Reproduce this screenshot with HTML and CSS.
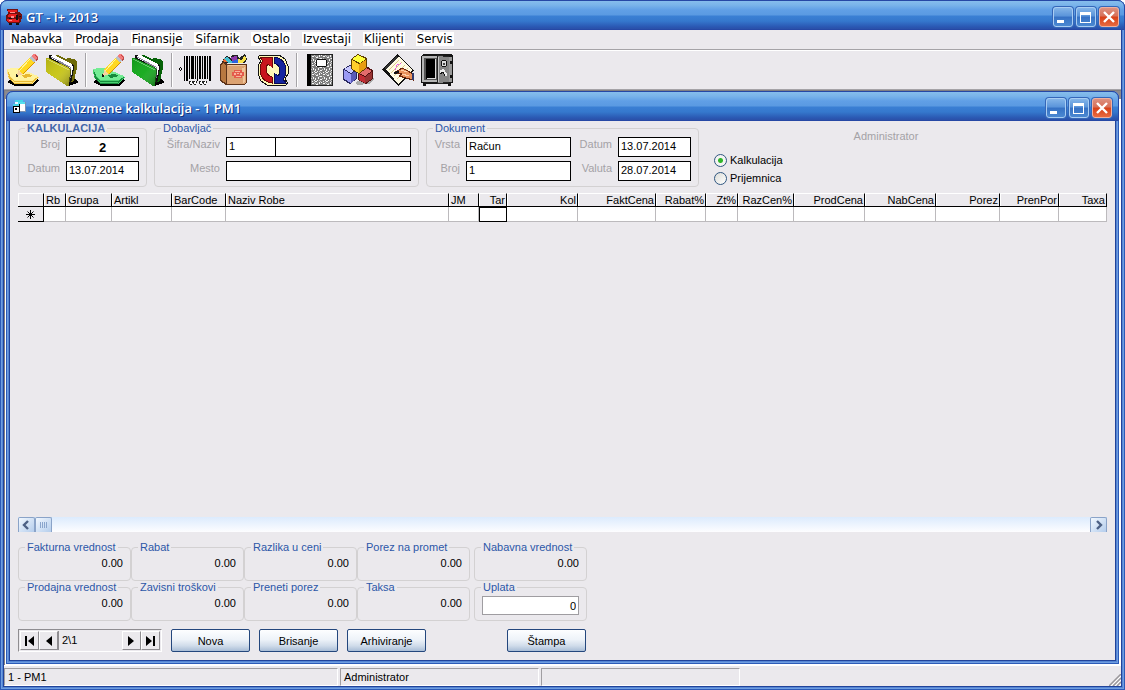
FILE: index.html
```html
<!DOCTYPE html>
<html lang="sr-Latn">
<head>
<meta charset="utf-8">
<title>GT - I+ 2013</title>
<link rel="stylesheet" href="styles.css">
</head>
<body>
<svg class="defs" aria-hidden="true">
  <symbol id="pad" viewBox="0 0 32 32">
    <path d="M3 25H29L32 26L27 32H8L0 28Z" fill="#000"/>
    <path d="M0 16L1 24L7 30H26L32 23L27 21L12 14Z" class="paper-edge"/>
    <path d="M0 15L5 14H13L28 21L32 22L26 26H7L2 20Z" class="paper-top"/>
    <path d="M1 22L7 27H26L31 23M2 24L7 29H25L29 25M1 18L3 23" fill="none" class="paper-line"/>
    <path d="M14 21L22 20L26 22L18 24Z" class="paper-mid"/>
    <path d="M10 22L11 16L22 4L28 8L16 20Z" fill="#d89000"/>
    <path d="M11 16L22 4L27 8L15 20Z" fill="#ffd820"/>
    <path d="M12 17L23 5" stroke="#fff49a"/>
    <path d="M22 4L24 2L29 6L27 9Z" fill="#b9bfc8"/>
    <path d="M24 2L26 0H28L31 3V5L29 7Z" fill="#f47b7b"/>
    <path d="M28 1L31 4L29 7" fill="none" stroke="#b84848"/>
    <path d="M10 22L11 16L16 20Z" fill="#f8d2a0"/>
    <path d="M9 23V20L12 22Z" fill="#111"/>
  </symbol>
  <symbol id="folder" viewBox="0 0 32 32">
    <path d="M24 25L29 25L32 27V29L28 30L23 32Z" fill="#000"/>
    <path d="M8 2L12 1L20 5L22 4L28 5L31 8V14L28 27L25 28L23 12Z" class="folder-back"/>
    <path d="M3 4V1H8L28 11V15L25 29H22V15Z" fill="#111"/>
    <path d="M4 3L6 1H8L26 10L27 13L25 24H24V15L22 13L5 4Z" fill="#fff"/>
    <path d="M5 3L24 13L25 24" fill="none" stroke="#8b899c"/>
    <path d="M0 4H3L22 13L25 16L23 32H21L0 18Z" class="folder-front"/>
    <path d="M0 4H3L22 13L25 16L23 32H21L0 18Z" fill="url(#shade)"/>
    <path d="M1 5L23 16" fill="none" stroke="#fff" stroke-opacity=".35"/>
    <path d="M3 4L22 13L25 16L23 31" fill="none" stroke="#000" stroke-opacity=".5"/>
  </symbol>
  <symbol id="arrow" viewBox="0 0 32 32">
    <path d="M15 29Q3 27 3 15Q3 10 6 7L3 3H15V14L11 10Q9 12 9 15Q9 21 15 23Z"/>
  </symbol>
  <linearGradient id="shade" x1="0" y1="0" x2="1" y2="1">
    <stop offset="0" stop-color="#000" stop-opacity=".12"/>
    <stop offset=".5" stop-color="#fff" stop-opacity=".05"/>
    <stop offset="1" stop-color="#000" stop-opacity=".4"/>
  </linearGradient>
  <pattern id="marble" width="11" height="9" patternUnits="userSpaceOnUse">
    <rect width="11" height="9" fill="#7c7c7c"/>
    <path d="M0 0H2V1H0ZM4 1H5V3H4ZM1 3H3V4H1ZM5 4H7V5H5ZM3 5H4V7H3ZM6 1H7V2H6ZM0 6H1V8H0ZM8 2H10V3H8ZM9 5H10V7H9ZM5 7H7V8H5ZM8 0H9V1H8ZM2 8H3V9H2ZM10 8H11V9H10Z" fill="#f6f6f6"/>
    <path d="M2 2H3V3H2ZM5 0H6V1H5ZM4 4H5V5H4ZM0 2H1V3H0ZM7 6H8V7H7ZM8 4H9V5H8ZM10 1H11V2H10ZM4 8H5V9H4Z" fill="#c4c4c4"/>
  </pattern>
  <symbol id="minimize" viewBox="0 0 20 20"><path d="M4 13H11V16H4Z" fill="#fff"/></symbol>
  <symbol id="maximize" viewBox="0 0 20 20"><path d="M4 5H15V16H4ZM5 8V15H14V8Z" fill="#fff" fill-rule="evenodd"/></symbol>
  <symbol id="close" viewBox="0 0 20 20"><path d="M5 5L15 15M15 5L5 15" stroke="#fff" stroke-width="2.4"/></symbol>
</svg>

<div class="window">
  <header class="titlebar">
    <svg class="title-icon" viewBox="0 0 16 16" shape-rendering="crispEdges">
      <path d="M1 0H12V3H13L16 5V9L14 14H2L0 11V6L2 5V2H1Z" fill="#701010"/>
      <path d="M2 1H11V3H2ZM3 5H11L12 8H2ZM1 10H13V13H2Z" fill="#e81c1c"/>
      <path d="M4 3H9V4H4ZM5 7H8V9H5ZM3 11H6V12H3Z" fill="#ff8a8a"/>
      <path d="M10 6H12V11H10ZM3 9H6V10H3ZM3 14H6V16H3ZM10 14H13V16H10ZM13 7H15V8H13Z" fill="#111"/>
    </svg>
    <h1 class="caption">GT - I+ 2013</h1>
    <div class="window-buttons">
      <button class="wb" aria-label="Minimize"><svg><use href="#minimize"/></svg></button>
      <button class="wb" aria-label="Maximize"><svg><use href="#maximize"/></svg></button>
      <button class="wb wb-close" aria-label="Close"><svg><use href="#close"/></svg></button>
    </div>
  </header>

  <div class="frame">
    <nav class="menu">
      <a href="#">Nabavka</a><a href="#">Prodaja</a><a href="#">Finansije</a><a href="#">Sifarnik</a><a href="#">Ostalo</a><a href="#">Izvestaji</a><a href="#">Klijenti</a><a href="#">Servis</a>
    </nav>

    <div class="toolbar" role="toolbar">
      <button class="tool yellow" aria-label="Nova nabavka"><svg shape-rendering="crispEdges"><use href="#pad"/></svg></button>
      <button class="tool yellow" aria-label="Pregled nabavki"><svg shape-rendering="crispEdges"><use href="#folder"/></svg></button>
      <span class="sep"></span>
      <button class="tool green" aria-label="Nova prodaja"><svg shape-rendering="crispEdges"><use href="#pad"/></svg></button>
      <button class="tool green" aria-label="Pregled prodaje"><svg shape-rendering="crispEdges"><use href="#folder"/></svg></button>
      <span class="sep"></span>
      <button class="tool" aria-label="Bar kod">
        <svg viewBox="0 0 32 32" shape-rendering="crispEdges">
          <path d="M5 2H6V27H5ZM7 2H9V27H7ZM10 2H11V25H10ZM12 2H15V25H12ZM16 2H17V25H16ZM18 2H19V27H18ZM20 2H22V25H20ZM23 2H24V25H23ZM25 2H27V25H25ZM28 2H29V25H28ZM30 2H32V27H30Z" fill="#000"/>
          <path d="M0 14H1V13H2V14H3V16H2V17H1V16H0ZM1 14V16H2V14Z" fill="#000" fill-rule="evenodd"/>
          <path d="M10 27H13V30H10ZM14 27H17V30H14ZM20 27H23V30H20ZM24 27H27V30H24Z" fill="#fff" stroke="#222" stroke-dasharray="2 1"/>
        </svg>
      </button>
      <button class="tool" aria-label="Artikli">
        <svg viewBox="0 0 32 32" shape-rendering="crispEdges">
          <path d="M4 9L5 5L9 2L13 4L14 1H20L21 4L27 0L29 5L27 9Z" fill="#222"/>
          <path d="M5 6L8 3L13 8H6Z" fill="#ed6a2c"/><path d="M6 4L10 3L15 9H10Z" fill="#48bfd0"/>
          <path d="M13 3L19 2L20 7L15 9Z" fill="#8c38a8"/><path d="M14 7L20 5L21 9H14Z" fill="#2b62dc"/>
          <path d="M20 5L24 6L27 1L28 5L25 9H20Z" fill="#f8e34a"/>
          <path d="M2 10L5 7L10 10H29V28L26 31H8L2 27Z" fill="#5d3218"/>
          <path d="M3 11L5 9L8 12V29L3 26Z" fill="#b87840"/>
          <path d="M9 11H28V28L26 30H9Z" fill="#dba271"/>
          <path d="M10 11H27V12H10ZM24 14L27 13V28L25 29Z" fill="#efc59a"/>
          <path d="M14 18H16V16H24V18H26V22H24V24H16V22H14Z" fill="#e45b4c"/>
          <path d="M17 17H22V18H17ZM16 19H18V21H16ZM19 19H21V20H19ZM22 19H24V21H22ZM18 22H23V23H18Z" fill="#f7b49c"/>
        </svg>
      </button>
      <button class="tool" aria-label="Osveži">
        <svg viewBox="0 0 32 32" shape-rendering="crispEdges">
          <path d="M1 3L3 1H22L28 5L31 12V20L28 25L31 29L29 31H10L4 27L1 20V12L4 7Z" fill="#fff8b4" stroke="#111"/>
          <use href="#arrow" fill="#c9151d" stroke="#6b0909"/>
          <use href="#arrow" fill="#15259f" stroke="#090b50" transform="rotate(180 16 16)"/>
          <path d="M11 12H14L21 20H18Z" fill="#fff8c6"/>
        </svg>
      </button>
      <span class="sep"></span>
      <button class="tool" aria-label="Dnevnik">
        <svg viewBox="0 0 32 32" shape-rendering="crispEdges">
          <path d="M3 0H28L29 1V31L28 32H3Z" fill="#222"/>
          <path d="M7 1H28V31H7Z" fill="url(#marble)"/>
          <path d="M3 0H7V32H3Z" fill="#000"/>
          <path d="M13 5H22V6H23V12H22V13H13V12H12V6H13Z" fill="#111"/><path d="M13 6H22V12H13Z" fill="#fff"/>
        </svg>
      </button>
      <button class="tool" aria-label="Magacin">
        <svg viewBox="0 0 32 32" shape-rendering="crispEdges">
          <path d="M13 28L28 22L32 25L26 30L14 31Z" fill="#aaa"/>
          <path d="M0 15L7 11L14 15V25L7 30L0 26Z" fill="#26265f"/>
          <path d="M1 15L7 12L13 16L8 19Z" fill="#c6c6ff"/><path d="M1 16L8 20V29L1 25Z" fill="#9a9af4"/><path d="M8 20L13 17V25L8 29Z" fill="#5a5ab8"/>
          <path d="M15 18L23 12L30 16V25L23 30L15 26Z" fill="#541010"/>
          <path d="M16 19L23 14L29 17L22 22Z" fill="#e36c6c"/><path d="M16 20L22 23V29L16 26Z" fill="#c22c34"/><path d="M22 23L29 18V25L22 29Z" fill="#933"/>
          <path d="M8 5L15 0L24 4V14L16 20L8 15Z" fill="#604000"/>
          <path d="M9 5L15 1L23 5L17 9Z" fill="#ffff3c"/><path d="M9 6L16 10V19L9 15Z" fill="#ffce2b"/><path d="M16 10L23 6V14L16 19Z" fill="#e89d12"/>
        </svg>
      </button>
      <button class="tool" aria-label="Beleške">
        <svg viewBox="0 0 32 32" shape-rendering="crispEdges">
          <path d="M0 15L15 0L32 16L16 32Z" fill="#111"/>
          <path d="M4 15L17 2L30 16L16 30Z" fill="#fffbe4"/>
          <path d="M3 14L14 2L16 3L4 16Z" fill="#333"/>
          <path d="M7 16L17 6M9 19L20 8M12 22L23 11M15 25L26 14" stroke="#dcc987"/>
          <path d="M13 16L15 11L19 9" fill="none" stroke="#e65be2" stroke-dasharray="2 1"/>
          <path d="M12 19L20 14L24 16L31 20V26L24 24L17 22L20 20Z" fill="#e9925c" stroke="#6d250a"/>
          <path d="M19 16L25 18M20 20L27 22" stroke="#ffd0a8"/>
          <path d="M12 19L17 18" stroke="#111" stroke-width="2"/>
          <path d="M30 19H32V26H30Z" fill="#333c70"/>
        </svg>
      </button>
      <button class="tool" aria-label="Trezor">
        <svg viewBox="0 0 32 32" shape-rendering="crispEdges">
          <path d="M0 2L2 0H30L32 2V29H30V32H27V30H5V32H2V29H0Z" fill="#151515"/>
          <path d="M1 2H17V28H1Z" fill="#b5b5b5"/><path d="M3 4H16V26H3Z" fill="#555"/><path d="M5 5H14V25H5Z" fill="#000"/>
          <path d="M14 5H15V25H6V24H14Z" fill="#ddd"/>
          <path d="M16 1L28 3V28L16 30Z" fill="#858585" stroke="#222"/>
          <path d="M17 3H18V28H17Z" fill="#c7c7c7"/><path d="M28 3H31V28H28Z" fill="#999"/>
          <path d="M21 6H25V7H26V12H25V13H21V12H20V7H21Z" fill="#111"/><path d="M21 7H25V12H21Z" fill="#ddd"/><path d="M22 9H24V11H22Z" fill="#444"/>
          <path d="M19 18L22 16L25 20V22" fill="none" stroke="#eee" stroke-width="2"/><path d="M19 20L22 18L24 22" fill="none" stroke="#111"/>
          <path d="M29 7H31V10H29ZM29 21H31V24H29Z" fill="#111"/>
        </svg>
      </button>
    </div>

    <main class="mdi">
      <section class="child">
        <header class="titlebar titlebar-child">
          <svg class="title-icon" viewBox="0 0 16 16" shape-rendering="crispEdges">
            <path d="M3 0H11V9H3Z" fill="#eaf4ff"/><path d="M3 0H11V2H3Z" fill="#42d6e8"/>
            <path d="M6 2H13V11H6Z" fill="#fff" stroke="#7a8fb0"/><path d="M6 2H13V4H6Z" fill="#55e0ef"/>
            <path d="M1 4H7V12H1Z" fill="#fff" stroke="#000"/><path d="M1 4H7V6H1Z" fill="#48d4e4"/><path d="M1 6H7V7H1ZM3 8H5V10H3Z" fill="#000"/>
          </svg>
          <h2 class="caption">Izrada\Izmene kalkulacija - 1 PM1</h2>
          <div class="window-buttons">
            <button class="wb" aria-label="Minimize"><svg><use href="#minimize"/></svg></button>
            <button class="wb" aria-label="Maximize"><svg><use href="#maximize"/></svg></button>
            <button class="wb wb-close" aria-label="Close"><svg><use href="#close"/></svg></button>
          </div>
        </header>

        <form class="body">
          <div class="head">
            <fieldset class="group">
              <legend class="strong">KALKULACIJA</legend>
              <div class="fields fields-kalk">
                <label for="kb">Broj</label><input id="kb" class="box number" value="2">
                <label for="kd">Datum</label><input id="kd" class="box" value="13.07.2014">
              </div>
            </fieldset>
            <fieldset class="group">
              <legend>Dobavljač</legend>
              <div class="fields fields-dob">
                <label for="ds">Šifra/Naziv</label>
                <div class="pair"><input id="ds" class="box code" value="1"><input class="box" aria-label="Naziv"></div>
                <label for="dm">Mesto</label><input id="dm" class="box">
              </div>
            </fieldset>
            <fieldset class="group">
              <legend>Dokument</legend>
              <div class="fields fields-dok">
                <label for="dv">Vrsta</label><input id="dv" class="box" value="Račun">
                <label for="dd">Datum</label><input id="dd" class="box" value="13.07.2014">
                <label for="db">Broj</label><input id="db" class="box" value="1">
                <label for="dw">Valuta</label><input id="dw" class="box" value="28.07.2014">
              </div>
            </fieldset>
            <div class="kind">
              <label><input type="radio" name="kind" checked>Kalkulacija</label>
              <label><input type="radio" name="kind">Prijemnica</label>
            </div>
            <p class="user">Administrator</p>
          </div>

          <div class="grid-area">
            <table class="grid">
              <colgroup>
                <col class="w26"><col class="w22"><col class="w46"><col class="w60"><col class="w54"><col>
                <col class="w30"><col class="w28"><col class="w71"><col class="w78"><col class="w50"><col class="w32">
                <col class="w56"><col class="w71"><col class="w71"><col class="w64"><col class="w59"><col class="w48">
              </colgroup>
              <thead>
                <tr><th></th><th>Rb</th><th>Grupa</th><th>Artikl</th><th>BarCode</th><th>Naziv Robe</th><th>JM</th><th class="r">Tar</th><th class="r">Kol</th><th class="r">FaktCena</th><th class="r">Rabat%</th><th class="r">Zt%</th><th class="r">RazCen%</th><th class="r">ProdCena</th><th class="r">NabCena</th><th class="r">Porez</th><th class="r">PrenPor</th><th class="r">Taxa</th></tr>
              </thead>
              <tbody>
                <tr><td class="marker"><svg viewBox="0 0 9 9"><path d="M4.500 0V9M0 4.500H9M1.500 1.500L7.500 7.500M7.500 1.500L1.500 7.500" stroke="#000"/></svg></td><td></td><td></td><td></td><td></td><td></td><td></td><td class="current"></td><td></td><td></td><td></td><td></td><td></td><td></td><td></td><td></td><td></td><td></td></tr>
              </tbody>
            </table>
          </div>

          <div class="scroll">
            <button type="button" class="sb" aria-label="Levo"><svg viewBox="0 0 15 14"><path d="M9 3L5 7L9 11" fill="none" stroke="#4d6185" stroke-width="2.400"/></svg></button>
            <button type="button" class="sb" aria-label="Klizač"><svg viewBox="0 0 15 14" shape-rendering="crispEdges"><path d="M4.500 4V10M6.500 4V10M8.500 4V10M10.500 4V10" stroke="#8aa5cc"/></svg></button>
            <span class="track"></span>
            <button type="button" class="sb" aria-label="Desno"><svg viewBox="0 0 15 14"><path d="M6 3L10 7L6 11" fill="none" stroke="#4d6185" stroke-width="2.400"/></svg></button>
          </div>

          <div class="totals">
            <fieldset class="group total"><legend>Fakturna vrednost</legend><output>0.00</output></fieldset>
            <fieldset class="group total"><legend>Rabat</legend><output>0.00</output></fieldset>
            <fieldset class="group total"><legend>Razlika u ceni</legend><output>0.00</output></fieldset>
            <fieldset class="group total"><legend>Porez na promet</legend><output>0.00</output></fieldset>
            <fieldset class="group total last"><legend>Nabavna vrednost</legend><output>0.00</output></fieldset>
            <fieldset class="group total"><legend>Prodajna vrednost</legend><output>0.00</output></fieldset>
            <fieldset class="group total"><legend>Zavisni troškovi</legend><output>0.00</output></fieldset>
            <fieldset class="group total"><legend>Preneti porez</legend><output>0.00</output></fieldset>
            <fieldset class="group total"><legend>Taksa</legend><output>0.00</output></fieldset>
            <fieldset class="group total last"><legend>Uplata</legend><input class="paid" aria-label="Uplata" value="0"></fieldset>
          </div>

          <div class="actions">
            <div class="navigator">
              <button type="button" class="nb" aria-label="Prvi"><svg viewBox="0 0 18 18"><path d="M4 4H6V14H4ZM13 4V14L7 9Z"/></svg></button>
              <button type="button" class="nb" aria-label="Prethodni"><svg viewBox="0 0 18 18"><path d="M12 4V14L6 9Z"/></svg></button>
              <span class="position">2\1</span>
              <button type="button" class="nb" aria-label="Sledeći"><svg viewBox="0 0 18 18"><path d="M5 4V14L11 9Z"/></svg></button>
              <button type="button" class="nb" aria-label="Poslednji"><svg viewBox="0 0 18 18"><path d="M11 4H13V14H11ZM4 4V14L10 9Z"/></svg></button>
            </div>
            <button type="button" class="btn">Nova</button>
            <button type="button" class="btn">Brisanje</button>
            <button type="button" class="btn">Arhiviranje</button>
            <button type="button" class="btn print">Štampa</button>
          </div>
        </form>
      </section>
    </main>

    <footer class="status">
      <span class="panel panel-wide">1 - PM1</span><span class="panel">Administrator</span><span class="panel"></span>
      <svg class="grip" viewBox="0 0 12 12"><path d="M0 12L12 0M4 12L12 4M8 12L12 8" stroke="#9a989c" stroke-width="1.500"/><path d="M2 12L12 2M6 12L12 6M10 12L12 10" stroke="#fff"/></svg>
    </footer>
  </div>
</div>
</body>
</html>
```

FILE: styles.css
```css
* { box-sizing: border-box; }

body {
  margin: 0;
  background: #fff;
  color: #000;
  font: 11px/14px "Liberation Sans", Arial, sans-serif;
}

button, input { font: inherit; color: inherit; margin: 0; }
button { padding: 0; }
.defs { position: absolute; width: 0; height: 0; }

/* Main window */
.window {
  display: flex;
  flex-direction: column;
  min-height: 100vh;
  padding-bottom: 4px;
  border-radius: 8px 8px 0 0;
  background: #ebe9ed;
  box-shadow: inset 0 0 0 1px #2c5bb8, inset 0 0 0 2px #6f9de0, inset 0 0 0 3px #5586d4, inset 0 0 0 4px #21439a;
}

.titlebar {
  display: flex;
  align-items: center;
  height: 30px;
  padding: 3px 5px 0;
  border: 1px solid #2648a5;
  border-radius: 7px 7px 0 0;
  background: linear-gradient(#86bdec 0, #7ab4ea 4px, #609fe6 9px, #5a9ae2 14px, #3a7fd4 15px, #3578cd 20px, #2a57b2 26px, #2b50a8 100%);
}
.titlebar-child { padding-right: 6px; }
.title-icon { width: 16px; height: 16px; margin-right: 4px; }

.caption {
  flex: 1;
  margin: 0;
  color: #fff;
  font: 600 13px/18px "Open Sans", "Noto Sans", sans-serif;
  text-shadow: 1px 1px 0 #16327f;
}

.window-buttons { display: flex; gap: 3px; }
.wb {
  width: 20px;
  height: 20px;
  border: 1px solid #a9cdf2;
  border-radius: 3px;
  background: linear-gradient(#83b4e8 0, #5a94da 45%, #3671c4 50%, #4b89d2 100%);
  box-shadow: 0 0 0 1px #3567b8;
}
.wb svg { display: block; width: 20px; height: 20px; margin: -1px; }
.wb-close { border-color: #f0b0a0; background: linear-gradient(#dc9080 0, #d87058 45%, #d84018 50%, #e86a40 100%); }

.frame { display: flex; flex: 1; flex-direction: column; margin: 0 4px; }

.menu {
  display: flex;
  gap: 11px;
  height: 20px;
  padding: 2px 6px;
  border-bottom: 1px solid #a5a3a7;
  font: 13px/14px "DejaVu Sans Condensed", "DejaVu Sans", sans-serif;
}
.menu a { height: 14px; padding: 0 1px; background: #fff; color: #000; text-decoration: none; }

.toolbar {
  display: flex;
  align-items: center;
  height: 40px;
  border-top: 1px solid #fff;
  border-bottom: 1px solid #a5a3a7;
}
.tool { width: 39px; height: 38px; padding: 0 4px 0 3px; border: 0; background: none; }
.tool svg { display: block; width: 32px; height: 32px; }
.sep { width: 8px; height: 34px; background: linear-gradient(90deg, transparent 3px, #a5a3a7 3px, #a5a3a7 4px, #fff 4px, #fff 5px, transparent 5px); }

.paper-top { fill: var(--top); }
.paper-edge { fill: var(--edge); }
.paper-line { stroke: var(--line); }
.paper-mid { fill: var(--line); }
.folder-front { fill: var(--front); }
.folder-back { fill: var(--back); }
.yellow { --top: #fff3a0; --edge: #ffe98a; --line: #e8b932; --front: #c6c412; --back: #6e6a08; }
.green { --top: #74ec94; --edge: #48d070; --line: #168a3c; --front: #10a818; --back: #066208; }

/* Child window */
.mdi {
  display: flex;
  flex: 1;
  padding: 0 2px 1px 1px;
  border-top: 1px solid #807e82;
  border-left: 1px solid #807e82;
  background: linear-gradient(#8c8a8e 8px, #fff 8px);
}
.child {
  display: flex;
  flex: 1;
  flex-direction: column;
  padding-bottom: 4px;
  border-radius: 7px 7px 0 0;
  background: #ebe9ed;
  box-shadow: inset 0 0 0 1px #2c5bb8, inset 0 0 0 2px #6f9de0, inset 0 0 0 3px #5586d4, inset 0 0 0 4px #21439a;
}
.body { display: flex; flex: 1; flex-direction: column; margin: 0 4px; padding: 0 8px 8px; }

.head { display: flex; gap: 7px; }
.group {
  min-width: 0;
  margin: 0;
  padding: 0 7px 3px;
  border: 1px solid #d3d1d2;
  border-radius: 4px;
}
.group legend { height: 14px; margin-left: -1px; padding: 0 2px; color: #2c57a8; }
.group .strong { color: #4064a8; font-weight: bold; }

.fields { display: grid; grid-auto-rows: 20px; gap: 4px 6px; padding-top: 2px; }
.fields label { color: #a4a2a6; line-height: 14px; text-align: right; }
.fields-kalk { grid-template-columns: 34px 73px; }
.fields-dob { grid-template-columns: 58px 185px; }
.fields-dok { grid-template-columns: 26px 105px 35px 73px; }
.box { width: 100%; min-width: 0; height: 20px; padding: 0 2px 2px; border: 1px solid #000; background: #fff; }
.number { padding-bottom: 0; font-size: 13px; font-weight: bold; text-align: center; }
.pair { display: flex; }
.pair .code { flex: none; width: 49px; border-right: 0; }

.kind { padding: 30px 0 0 8px; }
.kind label { display: flex; align-items: center; gap: 3px; height: 18px; }
.kind input {
  appearance: none;
  width: 13px;
  height: 13px;
  border: 1px solid #2f5680;
  border-radius: 50%;
  background: linear-gradient(135deg, #dcdcd7, #fff);
}
.kind input:checked { background: radial-gradient(circle, #2fb52a 0 2px, #f4f4f2 3px); }
.user { margin: 8px 0 0 64px; color: #a4a2a6; }

/* Item grid */
.grid-area { flex: 1; margin-top: 6px; }
.grid { width: 100%; table-layout: fixed; border-collapse: separate; border-spacing: 0; }
.grid th {
  height: 14px;
  padding: 0 1px 0 2px;
  border-top: 1px solid #fff;
  border-right: 1px solid #000;
  border-bottom: 1px solid #000;
  font-weight: normal;
  line-height: 12px;
  text-align: left;
  white-space: nowrap;
  box-shadow: inset 1px 0 #fff;
}
.grid .r { text-align: right; }
.grid td { height: 15px; padding: 0; border-right: 1px solid #bcbabd; border-bottom: 1px solid #bcbabd; background: #fff; }
.grid .marker { border-color: #000; background: #ebe9ed; }
.marker svg { display: block; width: 9px; height: 9px; margin: 0 auto; }
.grid .current { border: 1px solid #000; }
.w22 { width: 22px; } .w26 { width: 26px; } .w28 { width: 28px; } .w30 { width: 30px; }
.w32 { width: 32px; } .w46 { width: 46px; } .w48 { width: 48px; } .w50 { width: 50px; }
.w54 { width: 54px; } .w56 { width: 56px; } .w59 { width: 59px; } .w60 { width: 60px; }
.w64 { width: 64px; } .w71 { width: 71px; } .w78 { width: 78px; }

.scroll { display: flex; height: 15px; background: linear-gradient(#dcebfd, #fdfdff); }
.track { flex: 1; }
.sb { width: 17px; border: 1px solid #8aa3c8; border-bottom: 0; border-radius: 2px 2px 0 0; background: linear-gradient(135deg, #f2f8ff, #b4cdec); }
.sb svg { display: block; width: 15px; height: 14px; }

/* Totals */
.totals { display: grid; grid-template-columns: repeat(4, 113px) 117px; grid-auto-rows: 40px; padding-top: 8px; }
.total { height: 41px; padding-bottom: 0; }
.total output { display: block; margin-top: 2px; text-align: right; }
.last { margin-left: 4px; }
.paid { display: block; width: 97px; height: 19px; margin-top: 2px; padding: 0 2px; border: 1px solid #9f9da1; background: #fff; text-align: right; }

.actions { display: flex; gap: 9px; padding-top: 9px; }
.navigator { display: flex; width: 144px; height: 23px; padding: 1px; border: 1px solid #8f8d91; border-right-color: #fff; border-bottom-color: #fff; }
.nb { width: 19px; border: 1px solid #fff; border-right-color: #8f8d91; border-bottom-color: #8f8d91; background: #ebe9ed; }
.nb svg { display: block; width: 18px; height: 18px; }
.position { flex: 1; padding: 0 3px; border-left: 1px solid #8f8d91; line-height: 19px; }
.btn {
  width: 79px;
  height: 23px;
  border: 1px solid #24477d;
  border-radius: 2px;
  background: linear-gradient(#fdfeff 0, #eef3f9 45%, #d0dcea 75%, #a9bdd6 100%);
}
.print { margin-left: 72px; }

/* Status bar */
.status { display: flex; align-items: flex-end; gap: 2px; height: 21px; padding-top: 2px; border-top: 1px solid #fff; }
.panel { width: 199px; height: 18px; padding: 0 3px; border: 1px solid #a09ea2; border-right-color: #fff; border-bottom-color: #fff; line-height: 16px; }
.panel-wide { width: 334px; }
.grip { width: 12px; height: 12px; margin-left: auto; }
```
